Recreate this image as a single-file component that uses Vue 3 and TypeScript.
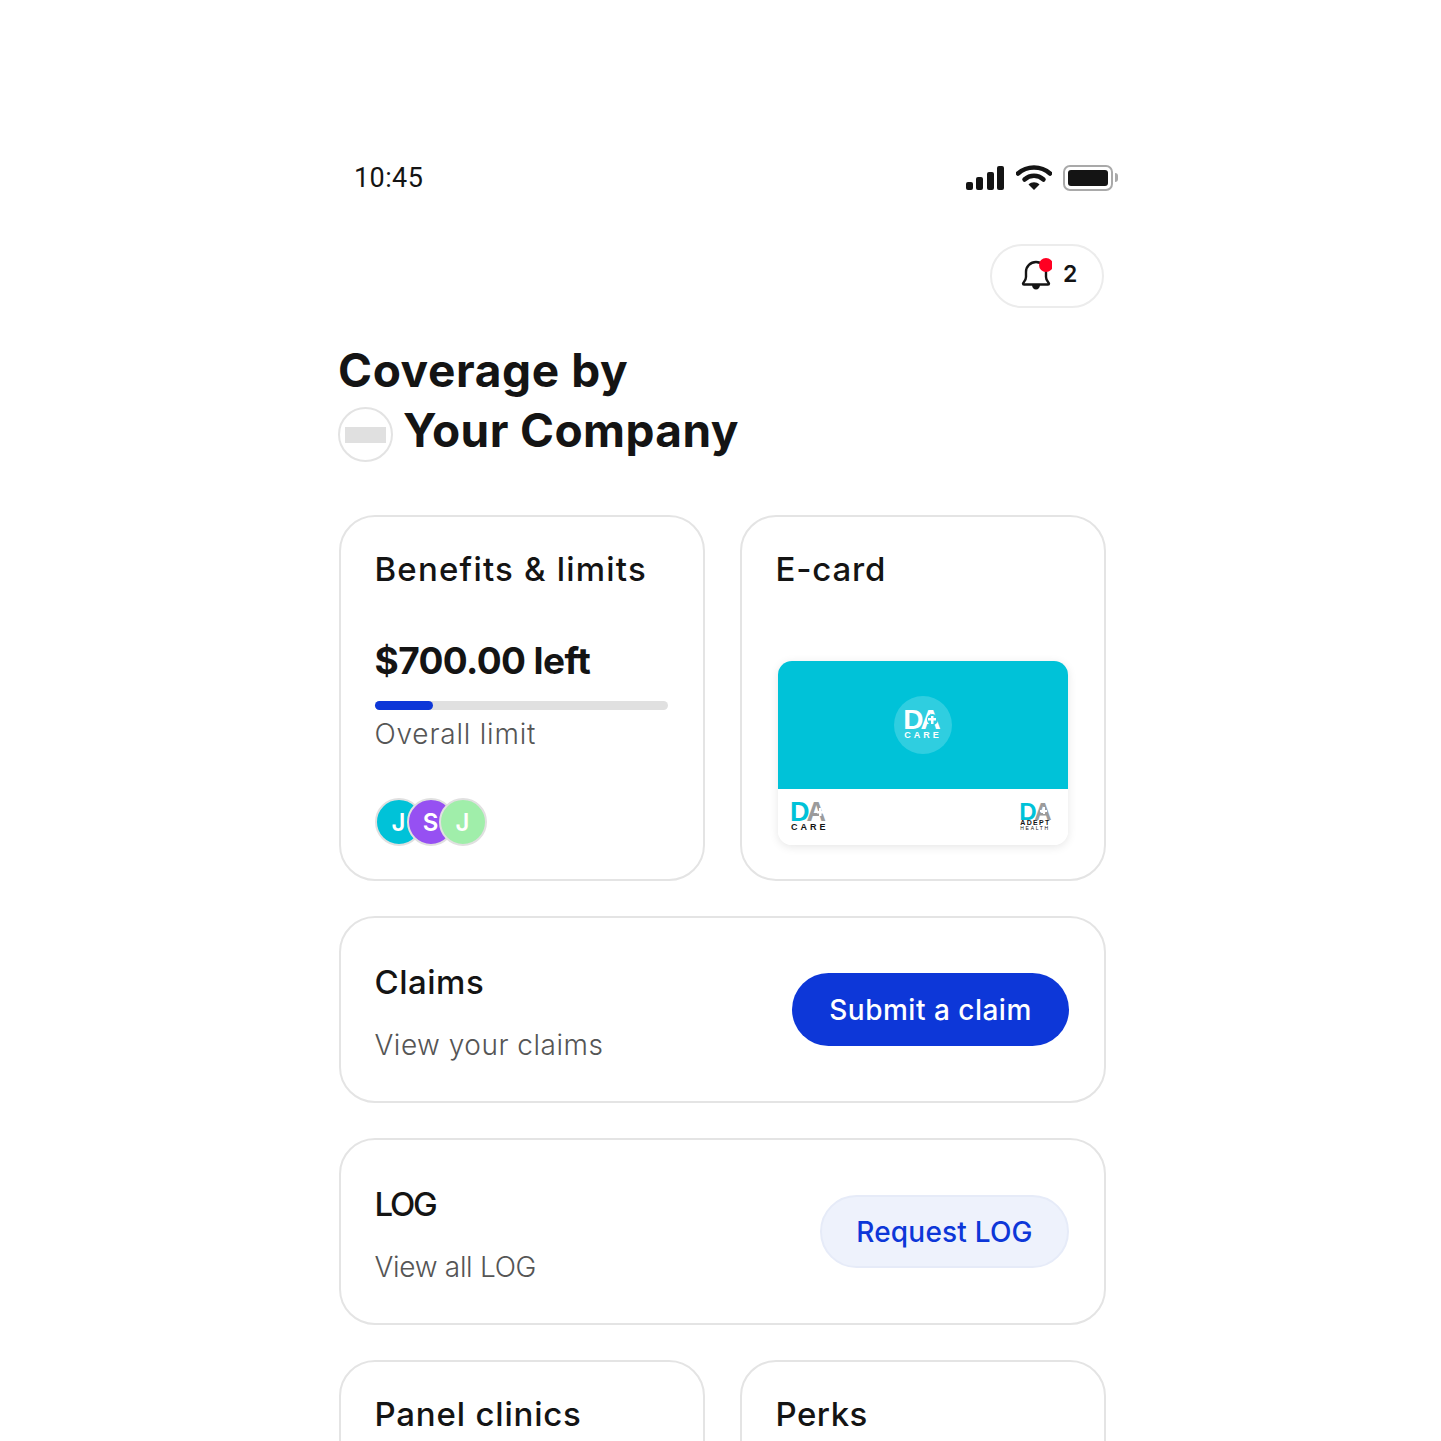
<script setup lang="ts">
interface Member {
  initial: string;
  color: string;
}

const members: Member[] = [
  { initial: 'J', color: '#00c2d8' },
  { initial: 'S', color: '#9650f2' },
  { initial: 'J', color: '#a0eeaa' },
];

const usedPercent = 20;
</script>

<template>
  <div class="screen">
    <div class="status">
      <span class="time">10:45</span>
      <div class="status-icons">
        <svg width="40" height="26" viewBox="0 0 40 26">
          <rect x="1" y="17" width="7" height="8" rx="2" fill="#141414" />
          <rect x="11" y="12" width="7" height="13" rx="2" fill="#141414" />
          <rect x="22" y="7" width="7" height="18" rx="2" fill="#141414" />
          <rect x="32" y="1" width="7" height="24" rx="2" fill="#141414" />
        </svg>
        <svg width="36" height="26" viewBox="0 0 36 26">
          <path d="M2 8.500C11 0.500 25 0.500 34 8.500" fill="none" stroke="#141414" stroke-width="4.500" stroke-linecap="round" />
          <path d="M8.500 14.500C14 9.500 22 9.500 27.500 14.500" fill="none" stroke="#141414" stroke-width="4.500" stroke-linecap="round" />
          <path d="M12.500 19.500C15.500 16.500 20.500 16.500 23.500 19.500L18 25Z" fill="#141414" />
        </svg>
        <div class="battery"><div class="battery-fill"></div></div>
      </div>
    </div>

    <div class="top-row">
      <div class="notify">
        <svg class="bell" width="32" height="34" viewBox="0 0 32 34">
          <path d="M3 25.500c0-1 3-2.500 3-6.500v-5c0-5.500 4.500-10 10-10s10 4.500 10 10v5c0 4 3 5.500 3 6.500 0 .6-.4 1-1 1H4c-.6 0-1-.4-1-1z" fill="none" stroke="#141414" stroke-width="2.400" stroke-linejoin="round" />
          <path d="M12 27h8c0 2.500-1.800 4.500-4 4.500s-4-2-4-4.500z" fill="#141414" />
          <circle cx="26" cy="7" r="7" fill="#ff0022" />
        </svg>
        <span class="count">2</span>
      </div>
    </div>

    <h1 class="title">
      <span class="title-line first">Coverage by</span>
      <span class="title-line company">
        <span class="company-logo"><span class="company-bar"></span></span>
        Your Company
      </span>
    </h1>

    <div class="cards">
      <section class="card square">
        <h2 class="benefits">Benefits &amp; limits</h2>
        <div class="amount">$700.00 left</div>
        <div class="track"><div class="fill" :style="{ width: usedPercent + '%' }"></div></div>
        <div class="sub limit">Overall limit</div>
        <div class="avatars">
          <span v-for="(m, i) in members" :key="i" class="avatar" :style="{ background: m.color }">{{ m.initial }}</span>
        </div>
      </section>

      <section class="card square">
        <h2 class="ecard-title">E-card</h2>
        <div class="ecard">
          <div class="ecard-top">
            <div class="badge">
              <span class="mark white">DA<i class="plus"></i></span>
              <span class="word white-word">CARE</span>
            </div>
          </div>
          <div class="ecard-bottom">
            <div class="logo">
              <span class="mark"><b>D</b><em>A</em><i class="plus"></i></span>
              <span class="word">CARE</span>
            </div>
            <div class="logo adept">
              <span class="mark"><b>D</b><em>A</em><i class="plus"></i></span>
              <span class="word">ADEPT</span>
              <span class="word thin">HEALTH</span>
            </div>
          </div>
        </div>
      </section>

      <section class="card wide">
        <div class="wide-text">
          <h2>Claims</h2>
          <div class="sub">View your claims</div>
        </div>
        <button class="btn primary" type="button">Submit a claim</button>
      </section>

      <section class="card wide">
        <div class="wide-text">
          <h2 class="log">LOG</h2>
          <div class="sub log-sub">View all LOG</div>
        </div>
        <button class="btn soft" type="button">Request LOG</button>
      </section>

      <section class="card square"><h2 class="panel">Panel clinics</h2></section>
      <section class="card square"><h2>Perks</h2></section>
    </div>
  </div>
</template>

<style>
html,
body {
  background: #fff;
}
</style>

<style scoped>
.screen {
  box-sizing: border-box;
  width: 1441px;
  height: 1441px;
  overflow: hidden;
  padding: 160px 336px 0 338px;
  font-family: Inter, "Liberation Sans", sans-serif;
  color: #141414;
  background: #fff;
}

.status {
  display: flex;
  align-items: center;
  justify-content: space-between;
  height: 36px;
  padding-left: 16px;
  margin-right: -13px;
}

.time {
  font-family: Roboto, sans-serif;
  font-size: 27px;
  letter-spacing: 0.4px;
}

.status-icons {
  display: flex;
  align-items: center;
  gap: 11px;
}

.battery {
  position: relative;
  box-sizing: border-box;
  width: 50px;
  height: 26px;
  padding: 3px;
  border: 2.5px solid #a9a9a9;
  border-radius: 7px;
  margin-right: 5px;
}

.battery::after {
  content: '';
  position: absolute;
  right: -7px;
  top: 6px;
  width: 3px;
  height: 9px;
  border-radius: 0 3px 3px 0;
  background: #a9a9a9;
}

.battery-fill {
  height: 100%;
  border-radius: 3px;
  background: #141414;
}

.top-row {
  display: flex;
  justify-content: flex-end;
  margin-top: 48px;
  margin-right: 1px;
}

.notify {
  box-sizing: border-box;
  display: flex;
  align-items: center;
  gap: 11px;
  width: 114px;
  height: 64px;
  padding-left: 28px;
  border: 2px solid #ececec;
  border-radius: 32px;
}

.bell {
  margin-top: -2px;
}

.count {
  font-size: 23px;
  font-weight: 600;
  margin-top: -4px;
}

.title {
  margin: 32px 0 0;
  font-size: 46px;
  font-weight: 700;
  line-height: 60px;
  letter-spacing: 0.4px;
}

.title-line {
  display: block;
}

.first {
  letter-spacing: 0.6px;
}

.company {
  display: flex;
  align-items: flex-start;
  gap: 10px;
}

.company-logo {
  box-sizing: border-box;
  display: flex;
  align-items: center;
  justify-content: center;
  width: 55px;
  height: 55px;
  margin-top: 7px;
  border: 2px solid #e3e3e3;
  border-radius: 50%;
}

.company-bar {
  width: 41px;
  height: 16px;
  background: #e0e0e0;
}

.cards {
  display: grid;
  grid-template-columns: 366.500px 366.500px;
  gap: 35px 34.500px;
  margin: 53px 0 0 0.5px;
}

.card {
  box-sizing: border-box;
  padding: 32px 35px 32px 34px;
  border: 2px solid #e4e4e4;
  border-radius: 36px;
}

.square {
  height: 366px;
}

.wide {
  grid-column: 1 / 3;
  display: flex;
  align-items: center;
  justify-content: space-between;
  height: 187px;
}

.wide-text {
  margin-top: 8px;
}

h2 {
  margin: 0;
  font-size: 33px;
  font-weight: 500;
  line-height: 40px;
  letter-spacing: 0.5px;
}

.benefits {
  letter-spacing: 1.200px;
}

.ecard-title {
  letter-spacing: 0.8px;
}

.log {
  letter-spacing: -2.200px;
}

.panel {
  letter-spacing: 0.8px;
}

.sub {
  margin-top: 23px;
  font-size: 28px;
  font-weight: 300;
  line-height: 40px;
  letter-spacing: 0.5px;
  color: #555;
}

.log-sub {
  letter-spacing: -0.3px;
}

.amount {
  margin-top: 50px;
  font-size: 37px;
  font-weight: 700;
  line-height: 44px;
  letter-spacing: -0.6px;
}

.track {
  height: 9px;
  margin-top: 18px;
  border-radius: 5px;
  background: #e0e0e0;
}

.fill {
  height: 100%;
  border-radius: 5px;
  background: #0d37d8;
}

.limit {
  margin-top: 4px;
  letter-spacing: 0.8px;
}

.avatars {
  display: flex;
  margin-top: 44px;
}

.avatar {
  box-sizing: border-box;
  display: flex;
  align-items: center;
  justify-content: center;
  width: 48px;
  height: 48px;
  border: 2px solid #e0e0e0;
  border-radius: 50%;
  font-size: 24px;
  font-weight: 600;
  color: #fff;
}

.avatar + .avatar {
  margin-left: -16px;
}

.ecard {
  width: 290px;
  height: 184px;
  margin: 72px 0 0 2.500px;
  overflow: hidden;
  border-radius: 14px;
  box-shadow: 0 2px 10px rgba(0, 0, 0, 0.1);
}

.ecard-top {
  display: flex;
  align-items: center;
  justify-content: center;
  height: 128px;
  background: #00c2d8;
}

.badge {
  display: flex;
  flex-direction: column;
  align-items: center;
  justify-content: center;
  width: 58px;
  height: 58px;
  border-radius: 50%;
  background: #2fcee0;
}

.mark {
  position: relative;
  display: block;
  margin-left: -1px;
  padding-right: 3px;
  font-family: "Liberation Sans", sans-serif;
  font-size: 27px;
  font-weight: 700;
  line-height: 19px;
  letter-spacing: -3px;
}

.mark b {
  color: #00c2d8;
}

.mark em {
  font-style: normal;
  color: #9b9b9b;
}

.mark.white {
  margin-left: -2px;
  font-size: 28px;
  line-height: 20px;
  letter-spacing: -3px;
  color: #fff;
}

.plus {
  position: absolute;
  right: 4px;
  top: 5px;
  width: 8px;
  height: 8px;
  background:
    linear-gradient(#fff, #fff) center / 8px 2.500px no-repeat,
    linear-gradient(#fff, #fff) center / 2.500px 8px no-repeat;
}

.mark.white .plus {
  top: 4px;
  right: 3px;
  width: 11px;
  height: 11px;
  border-radius: 50%;
  background:
    linear-gradient(#fff, #fff) center / 8px 2.500px no-repeat,
    linear-gradient(#fff, #fff) center / 2.500px 8px no-repeat,
    #2fcee0;
}

.word {
  display: block;
  font-family: "Liberation Sans", sans-serif;
  font-size: 9px;
  font-weight: 700;
  line-height: 10px;
  letter-spacing: 3px;
  color: #141414;
}

.white-word {
  color: #fff;
}

.ecard-bottom {
  display: flex;
  align-items: flex-start;
  justify-content: space-between;
  height: 56px;
  padding: 14px 16px 0 13px;
  background: #fff;
}

.adept .word {
  font-size: 7px;
  line-height: 6px;
  letter-spacing: 1.300px;
}

.adept .thin {
  font-size: 5px;
  line-height: 5px;
  letter-spacing: 1.700px;
  font-weight: 400;
}

.adept .mark {
  font-size: 24px;
  line-height: 17px;
  letter-spacing: -2.500px;
}

.adept .plus {
  top: 4px;
  right: 5px;
  width: 7px;
  height: 7px;
  background:
    linear-gradient(#fff, #fff) center / 7px 2px no-repeat,
    linear-gradient(#fff, #fff) center / 2px 7px no-repeat;
}

.btn {
  box-sizing: border-box;
  height: 73px;
  border-radius: 37px;
  font-family: inherit;
  font-size: 28px;
  font-weight: 500;
  letter-spacing: 0.5px;
}

.primary {
  width: 277px;
  border: 0;
  background: #0d37d8;
  color: #fff;
}

.soft {
  width: 249px;
  border: 2px solid #e6ebf8;
  background: #eef2fc;
  color: #0d37d8;
  letter-spacing: 0.2px;
}
</style>
